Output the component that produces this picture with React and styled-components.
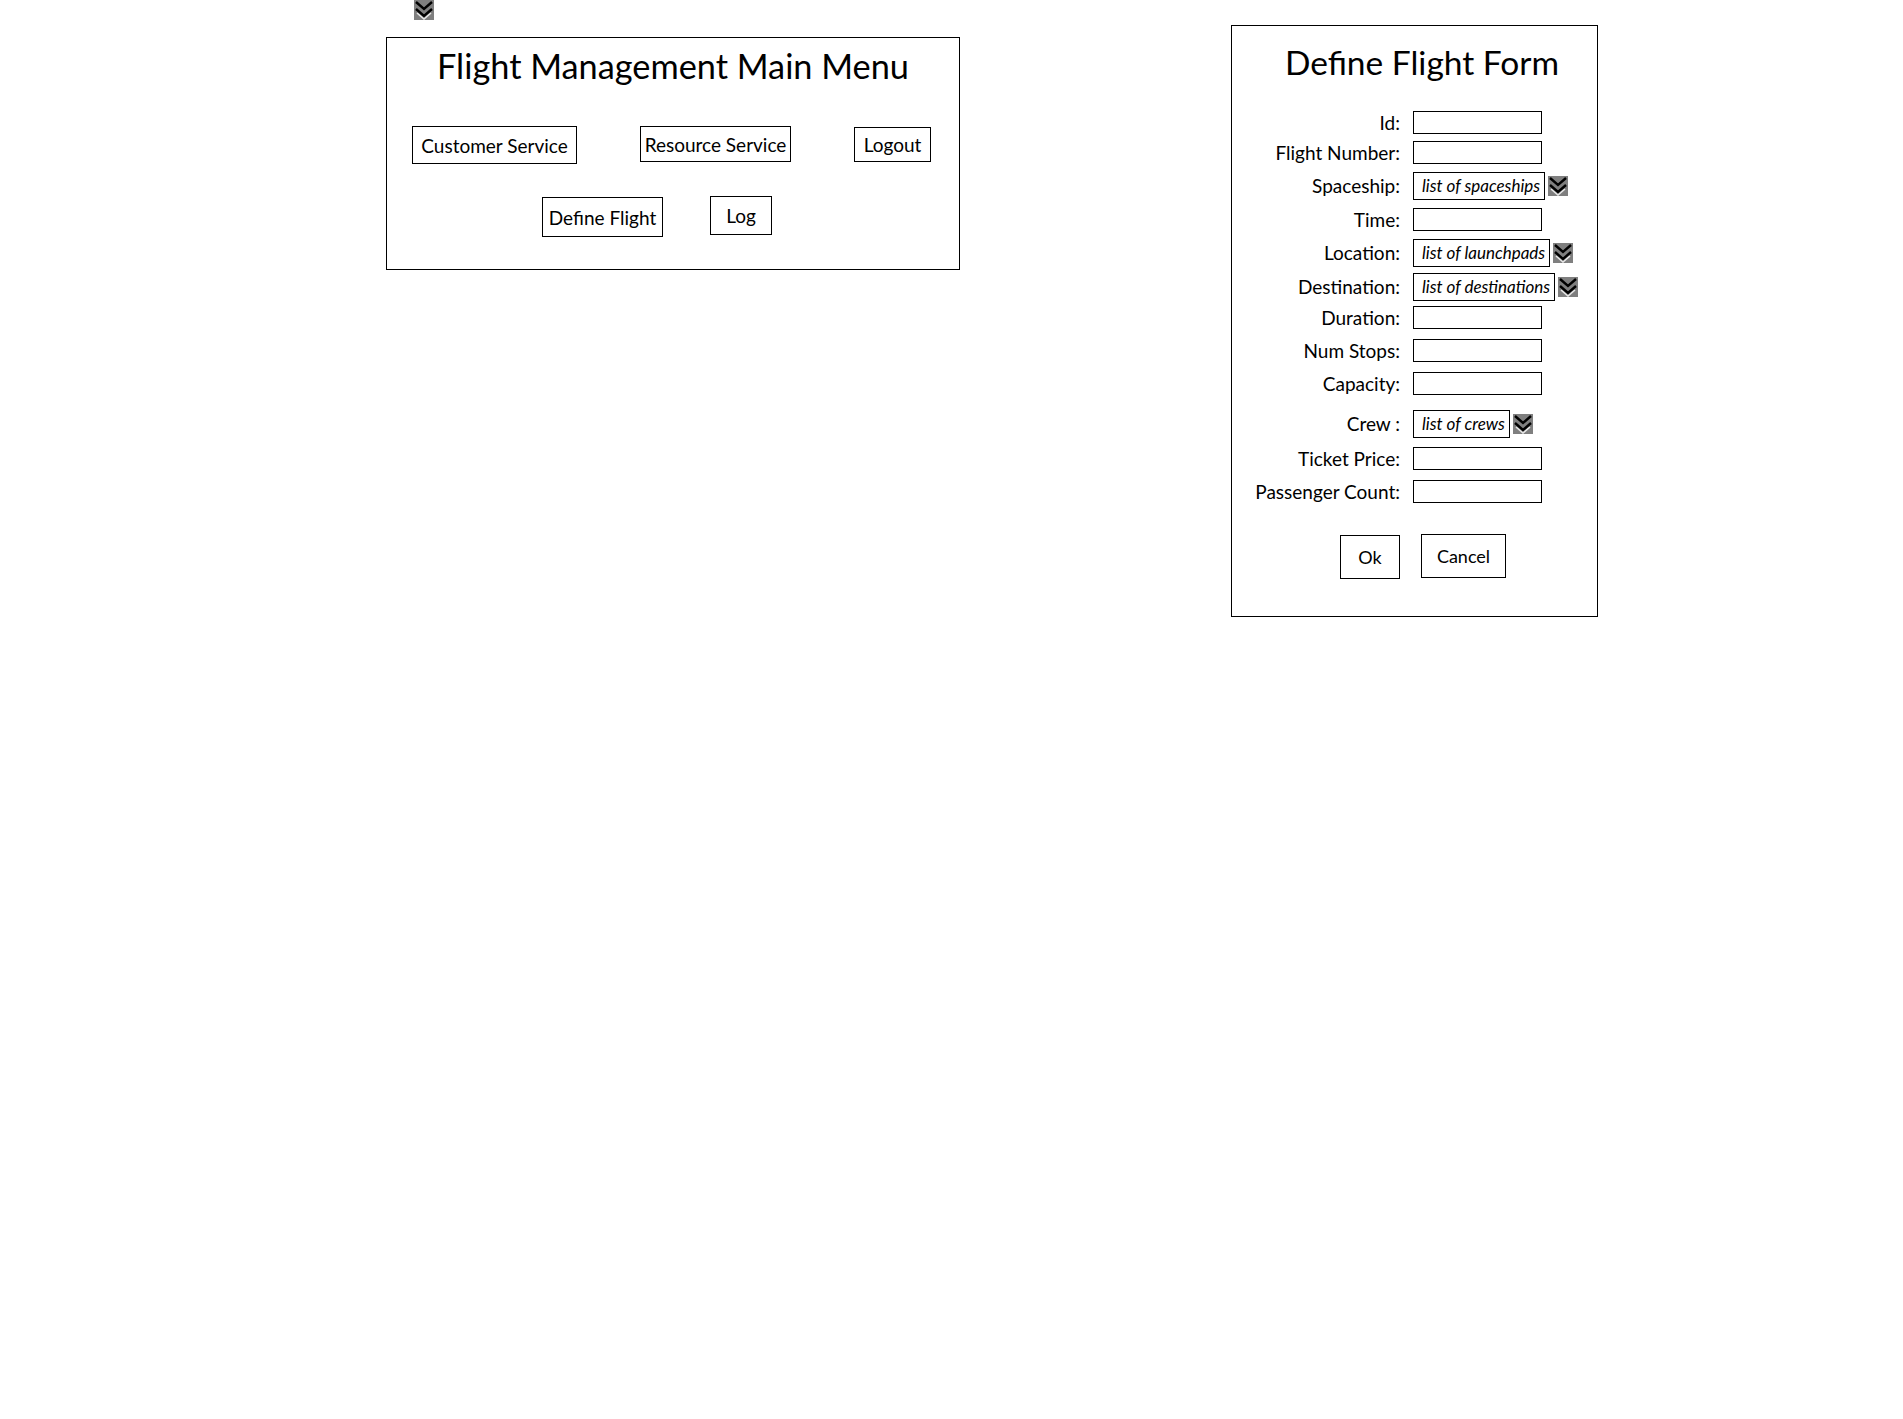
import styled, { createGlobalStyle } from 'styled-components';

const GlobalStyle = createGlobalStyle`
  body {
    margin: 0;
    background: #fff;
    color: #000;
    font-family: Lato, "Open Sans", sans-serif;
  }
`;

const Page = styled.div`
  display: flex;
  align-items: flex-start;
  padding-left: 386px;
`;

const MenuColumn = styled.div`
  display: flex;
  flex-direction: column;
  align-items: flex-start;
`;

const ArrowBox = styled.svg`
  display: block;
  flex: none;
  margin-left: ${({ $ml }) => $ml || 0}px;
`;

const DropArrow = ({ ml }) => (
  <ArrowBox $ml={ml} width="20" height="20" viewBox="0 0 20 20">
    <rect width="20" height="20" fill="#7f7f7f" />
    <polyline points="3,13 10,19 17,13" fill="none" stroke="#e6e6e6" strokeWidth="1.6" />
    <polyline points="2,2 10,9 18,2" fill="none" stroke="#000" strokeWidth="2.4" />
    <polyline points="2,9 10,16 18,9" fill="none" stroke="#000" strokeWidth="2.4" />
  </ArrowBox>
);

const Panel = styled.section`
  box-sizing: border-box;
  border: 1px solid #000;
  width: ${({ $w }) => $w}px;
  height: ${({ $h }) => $h}px;
  margin-top: ${({ $mt }) => $mt}px;
  margin-left: ${({ $ml }) => $ml || 0}px;
  flex: none;
`;

const Title = styled.h1`
  margin: ${({ $mt }) => $mt}px 0 0;
  padding-left: ${({ $pl }) => $pl || 0}px;
  font-size: ${({ $size }) => $size}px;
  line-height: ${({ $lh }) => $lh}px;
  font-weight: 400;
  text-align: center;
  white-space: nowrap;
`;

const ButtonRow = styled.div`
  display: flex;
  align-items: flex-start;
  gap: ${({ $gap }) => $gap}px;
  margin-top: ${({ $mt }) => $mt}px;
  padding-left: ${({ $pl }) => $pl}px;
`;

const Button = styled.button`
  box-sizing: border-box;
  display: flex;
  align-items: center;
  justify-content: center;
  width: ${({ $w }) => $w}px;
  height: ${({ $h }) => $h}px;
  margin-top: ${({ $dy }) => $dy || 0}px;
  padding: 0;
  border: 1px solid #000;
  background: #fff;
  color: #000;
  font-family: inherit;
  font-size: ${({ $size }) => $size || 19}px;
  white-space: nowrap;
  cursor: pointer;
`;

const Fields = styled.div`
  margin-top: 27px;
`;

const FieldRow = styled.div`
  display: grid;
  grid-template-columns: 168px auto;
  column-gap: 13px;
  align-items: center;
  height: 29px;
  margin-top: ${({ $space }) => $space}px;
`;

const Label = styled.label`
  text-align: right;
  font-size: 19px;
  white-space: nowrap;
`;

const TextBox = styled.div`
  box-sizing: border-box;
  width: 129px;
  height: 23px;
  border: 1px solid #000;
`;

const SelectGroup = styled.div`
  display: flex;
  align-items: center;
  gap: 3px;
`;

const SelectBox = styled.div`
  box-sizing: border-box;
  display: flex;
  align-items: center;
  height: 28px;
  padding: 0 4px 0 8px;
  border: 1px solid #000;
  font-size: 17px;
  font-style: italic;
  white-space: nowrap;
`;

const fields = [
  { label: 'Id:', space: 0 },
  { label: 'Flight Number:', space: 1 },
  { label: 'Spaceship:', space: 4, list: 'list of spaceships' },
  { label: 'Time:', space: 5 },
  { label: 'Location:', space: 4, list: 'list of launchpads' },
  { label: 'Destination:', space: 5, list: 'list of destinations' },
  { label: 'Duration:', space: 2 },
  { label: 'Num Stops:', space: 4 },
  { label: 'Capacity:', space: 4 },
  { label: 'Crew :', space: 11, list: 'list of crews' },
  { label: 'Ticket Price:', space: 6 },
  { label: 'Passenger Count:', space: 4 },
];

const App = () => (
  <>
    <GlobalStyle />
    <Page>
      <MenuColumn>
        <DropArrow ml={28} />
        <Panel $w={574} $h={233} $mt={17}>
          <Title $size={34.3} $lh={40} $mt={8}>
            Flight Management Main Menu
          </Title>
          <ButtonRow $gap={63} $mt={40} $pl={25}>
            <Button $w={165} $h={38}>Customer Service</Button>
            <Button $w={151} $h={36}>Resource Service</Button>
            <Button $w={77} $h={35} $dy={1}>Logout</Button>
          </ButtonRow>
          <ButtonRow $gap={47} $mt={32} $pl={155}>
            <Button $w={121} $h={40} $dy={1}>Define Flight</Button>
            <Button $w={62} $h={39}>Log</Button>
          </ButtonRow>
        </Panel>
      </MenuColumn>

      <Panel $w={367} $h={592} $mt={25} $ml={271}>
        <Title $size={33.5} $lh={38} $mt={17} $pl={15}>
          Define Flight Form
        </Title>
        <Fields>
          {fields.map((f) => (
            <FieldRow key={f.label} $space={f.space}>
              <Label>{f.label}</Label>
              {f.list ? (
                <SelectGroup>
                  <SelectBox>{f.list}</SelectBox>
                  <DropArrow />
                </SelectGroup>
              ) : (
                <TextBox />
              )}
            </FieldRow>
          ))}
        </Fields>
        <ButtonRow $gap={21} $mt={29} $pl={108}>
          <Button $w={60} $h={44} $size={18}>Ok</Button>
          <Button $w={85} $h={44} $size={18} $dy={-1}>Cancel</Button>
        </ButtonRow>
      </Panel>
    </Page>
  </>
);

export default App;
